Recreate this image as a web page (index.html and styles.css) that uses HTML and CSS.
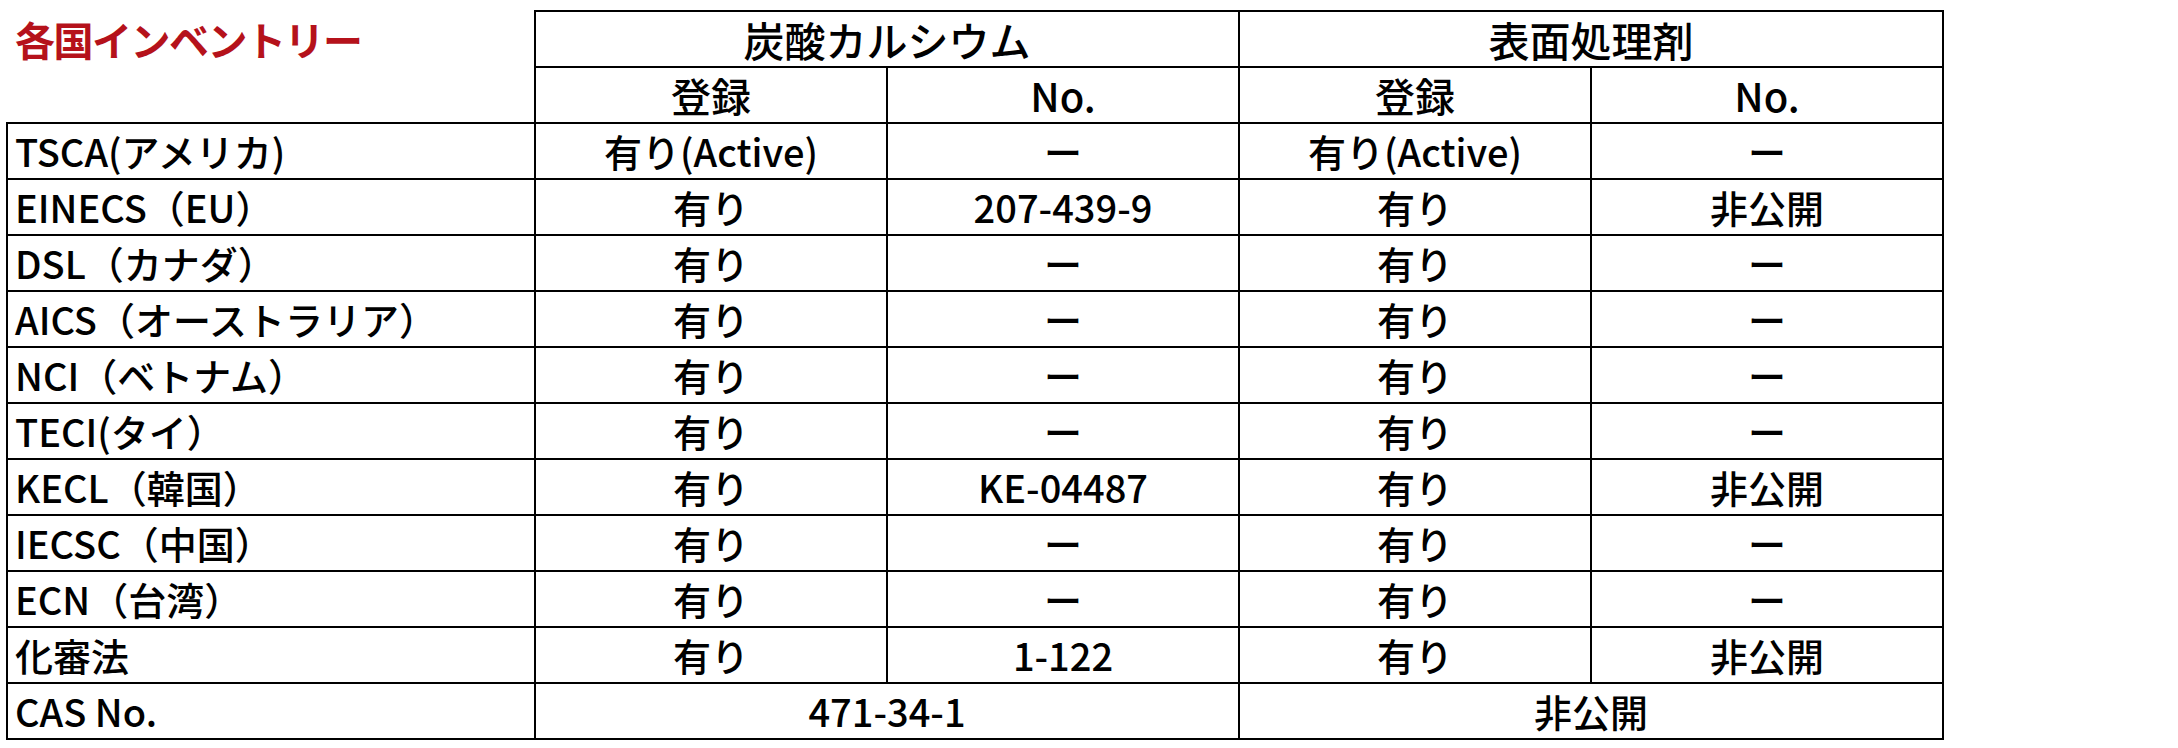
FILE: index.html
```html
<!DOCTYPE html>
<html lang="ja">
<head>
<meta charset="utf-8">
<title>各国インベントリー</title>
<link rel="stylesheet" href="styles.css">
</head>
<body>
<table class="inv">
  <colgroup>
    <col class="c-name">
    <col class="c-val">
    <col class="c-val">
    <col class="c-val">
    <col class="c-val">
  </colgroup>
  <thead>
    <tr class="h1">
      <th class="corner" rowspan="2"><div class="title">各国インベントリー</div></th>
      <th colspan="2">炭酸カルシウム</th>
      <th colspan="2">表面処理剤</th>
    </tr>
    <tr class="h2">
      <th>登録</th>
      <th>No.</th>
      <th>登録</th>
      <th>No.</th>
    </tr>
  </thead>
  <tbody>
    <tr><td class="name">TSCA(アメリカ)</td><td>有り(Active)</td><td>ー</td><td>有り(Active)</td><td>ー</td></tr>
    <tr><td class="name">EINECS（EU）</td><td>有り</td><td>207-439-9</td><td>有り</td><td>非公開</td></tr>
    <tr><td class="name">DSL（カナダ）</td><td>有り</td><td>ー</td><td>有り</td><td>ー</td></tr>
    <tr><td class="name">AICS（オーストラリア）</td><td>有り</td><td>ー</td><td>有り</td><td>ー</td></tr>
    <tr><td class="name">NCI（ベトナム）</td><td>有り</td><td>ー</td><td>有り</td><td>ー</td></tr>
    <tr><td class="name">TECI(タイ）</td><td>有り</td><td>ー</td><td>有り</td><td>ー</td></tr>
    <tr><td class="name">KECL（韓国）</td><td>有り</td><td>KE-04487</td><td>有り</td><td>非公開</td></tr>
    <tr><td class="name">IECSC（中国）</td><td>有り</td><td>ー</td><td>有り</td><td>ー</td></tr>
    <tr><td class="name">ECN（台湾）</td><td>有り</td><td>ー</td><td>有り</td><td>ー</td></tr>
    <tr><td class="name">化審法</td><td>有り</td><td>1-122</td><td>有り</td><td>非公開</td></tr>
    <tr><td class="name">CAS No.</td><td colspan="2">471-34-1</td><td colspan="2">非公開</td></tr>
  </tbody>
</table>
</body>
</html>
```

FILE: styles.css
```css
html, body {
  margin: 0;
  padding: 0;
  background: #ffffff;
}

body {
  padding: 10px 0 0 6px;
  font-family: "Noto Sans CJK JP", "Noto Sans", sans-serif;
  color: #000000;
}

.inv {
  border-collapse: collapse;
  table-layout: fixed;
  width: 1937px;
  font-size: 38px;
  font-weight: 500;
  line-height: 1;
}

.c-name { width: 528px; }
.c-val { width: 352px; }

.inv th,
.inv td {
  border: 2px solid #000000;
  height: 54px;
  padding: 0 4px;
  text-align: center;
  vertical-align: middle;
  font-weight: 500;
  white-space: nowrap;
}

.inv .h1 th {
  font-size: 41px;
}

.inv .h2 th {
  font-size: 40px;
}

.inv .h1 th.corner {
  border-top: none;
  border-left: none;
  text-align: left;
  vertical-align: top;
  padding: 8px 0 0 8px;
}

.title {
  font-size: 40px;
  font-weight: bold;
  color: #b5121b;
  line-height: 40px;
  letter-spacing: -1.5px;
}

.inv td.name {
  text-align: left;
  padding-left: 7px;
}
```
